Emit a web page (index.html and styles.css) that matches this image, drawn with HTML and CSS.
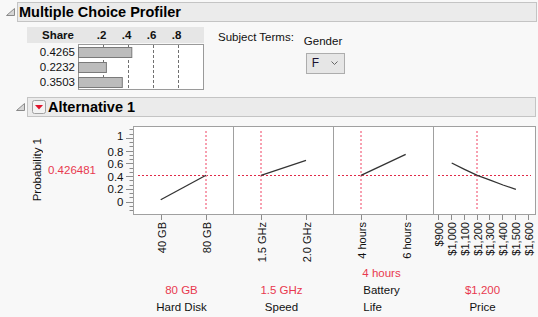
FILE: index.html
```html
<!DOCTYPE html>
<html lang="en">
<head>
<meta charset="UTF-8">
<meta name="viewport" content="width=device-width, initial-scale=1.0">
<title>Multiple Choice Profiler</title>
<link rel="stylesheet" href="styles.css">
</head>
<body>

<div class="outline">
    <div class="ol-head">
        <span class="disc"><svg width="9" height="8"><polygon points="0.5,7.5 8.5,7.5 8.5,0.5"/></svg></span>
        <div class="ol-bar root-bar"><span class="ol-title">Multiple Choice Profiler</span></div>
    </div>
    <div class="top-body">
        <div class="share">
            <div class="share-head">
                <span class="share-title">Share</span>
                <div class="share-ticks"><span>.2</span><span>.4</span><span>.6</span><span>.8</span></div>
            </div>
            <div class="share-body">
                <div class="share-vals">
                    <div>0.4265</div>
                    <div>0.2232</div>
                    <div>0.3503</div>
                </div>
                <svg class="share-plot" width="126" height="46">
                    <rect class="share-frame" x="0.5" y="0.5" width="125" height="45"/>
                    <line class="share-grid" x1="25.5" y1="1" x2="25.5" y2="45"/>
                    <line class="share-grid" x1="50.5" y1="1" x2="50.5" y2="45"/>
                    <line class="share-grid" x1="75.5" y1="1" x2="75.5" y2="45"/>
                    <line class="share-grid" x1="100.5" y1="1" x2="100.5" y2="45"/>
                    <rect class="share-bar" x="0.5" y="3.5" width="53.3" height="10"/>
                    <rect class="share-bar" x="0.5" y="18.5" width="27.9" height="10"/>
                    <rect class="share-bar" x="0.5" y="33.5" width="43.8" height="10"/>
                </svg>
            </div>
        </div>
        <div class="subject">
            <span class="subject-label">Subject Terms:</span>
            <div class="term">
                <span>Gender</span>
                <div class="combo">
                    <span>F</span>
                    <svg class="chev" width="7" height="5"><polyline points="0.5,0.5 3.5,3.5 6.5,0.5"/></svg>
                </div>
            </div>
        </div>
    </div>

    <div class="outline sub">
        <div class="ol-head">
            <span class="disc"><svg width="9" height="8"><polygon points="0.5,7.5 8.5,7.5 8.5,0.5"/></svg></span>
            <div class="ol-bar sub-bar">
                <span class="red-btn">
                    <svg width="14" height="14">
                        <rect x="0.5" y="0.5" width="13" height="13" rx="2"/>
                        <polygon points="3,5 11,5 7,9.5"/>
                    </svg>
                </span>
                <span class="ol-title">Alternative 1</span>
            </div>
        </div>
        <div class="profiler">
            <div class="prof-top">
                <div class="ylabel-col"><span class="ylabel">Probability 1</span></div>
                <div class="yvalue-col"><span class="current">0.426481</span></div>
                <svg class="prof-plot" width="437" height="144">
                    <!-- y axis -->
                    <g class="tick">
                        <line x1="29.5" y1="9.5" x2="33" y2="9.5"/>
                        <line x1="29.5" y1="14.5" x2="33" y2="14.5"/>
                        <line x1="26" y1="18.5" x2="33" y2="18.5"/>
                        <line x1="29.5" y1="22.5" x2="33" y2="22.5"/>
                        <line x1="29.5" y1="26.5" x2="33" y2="26.5"/>
                        <line x1="26" y1="31.5" x2="33" y2="31.5"/>
                        <line x1="29.5" y1="35.5" x2="33" y2="35.5"/>
                        <line x1="29.5" y1="39.5" x2="33" y2="39.5"/>
                        <line x1="26" y1="43.5" x2="33" y2="43.5"/>
                        <line x1="29.5" y1="48.5" x2="33" y2="48.5"/>
                        <line x1="29.5" y1="52.5" x2="33" y2="52.5"/>
                        <line x1="26" y1="56.5" x2="33" y2="56.5"/>
                        <line x1="29.5" y1="60.5" x2="33" y2="60.5"/>
                        <line x1="29.5" y1="65.5" x2="33" y2="65.5"/>
                        <line x1="26" y1="69.5" x2="33" y2="69.5"/>
                        <line x1="29.5" y1="73.5" x2="33" y2="73.5"/>
                        <line x1="29.5" y1="77.5" x2="33" y2="77.5"/>
                        <line x1="26" y1="82.5" x2="33" y2="82.5"/>
                        <line x1="29.5" y1="86.5" x2="33" y2="86.5"/>
                        <line x1="29.5" y1="90.5" x2="33" y2="90.5"/>
                    </g>
                    <g class="axis-text" text-anchor="end">
                        <text x="23.5" y="20">1</text>
                        <text x="23.5" y="36">0.8</text>
                        <text x="23.5" y="48">0.6</text>
                        <text x="23.5" y="60.6">0.4</text>
                        <text x="23.5" y="73.3">0.2</text>
                        <text x="23.5" y="86">0</text>
                    </g>

                    <!-- panels -->
                    <rect class="frame" x="33.5" y="6.5" width="402" height="88"/>
                    <line class="frame-line" x1="133.5" y1="6.5" x2="133.5" y2="94.5"/>
                    <line class="frame-line" x1="233.5" y1="6.5" x2="233.5" y2="94.5"/>
                    <line class="frame-line" x1="333.5" y1="6.5" x2="333.5" y2="94.5"/>

                    <!-- current settings -->
                    <g class="cur-h">
                        <line x1="38" y1="55.5" x2="129" y2="55.5"/>
                        <line x1="138" y1="55.5" x2="229" y2="55.5"/>
                        <line x1="238" y1="55.5" x2="329" y2="55.5"/>
                        <line x1="338" y1="55.5" x2="431" y2="55.5"/>
                    </g>
                    <g class="cur-v">
                        <line x1="106" y1="11" x2="106" y2="90"/>
                        <line x1="161" y1="11" x2="161" y2="90"/>
                        <line x1="261" y1="11" x2="261" y2="90"/>
                        <line x1="377" y1="11" x2="377" y2="90"/>
                    </g>

                    <!-- traces -->
                    <g class="trace">
                        <polyline points="60.7,79.7 106,55.3"/>
                        <polyline points="161,55.3 206,40.3"/>
                        <polyline points="261,55.3 305.7,34.3"/>
                        <polyline points="351.7,43 364.5,49.3 377.3,55.3 390.2,60.2 403,65 415.9,69.3"/>
                    </g>

                    <!-- x axes -->
                    <g class="tick">
                        <line x1="61.5" y1="95" x2="61.5" y2="100"/>
                        <line x1="106.5" y1="95" x2="106.5" y2="100"/>
                        <line x1="161.5" y1="95" x2="161.5" y2="100"/>
                        <line x1="206.5" y1="95" x2="206.5" y2="100"/>
                        <line x1="261.5" y1="95" x2="261.5" y2="100"/>
                        <line x1="306.5" y1="95" x2="306.5" y2="100"/>
                        <line x1="338.5" y1="95" x2="338.5" y2="100"/>
                        <line x1="351.5" y1="95" x2="351.5" y2="100"/>
                        <line x1="364.5" y1="95" x2="364.5" y2="100"/>
                        <line x1="377.5" y1="95" x2="377.5" y2="100"/>
                        <line x1="389.5" y1="95" x2="389.5" y2="100"/>
                        <line x1="402.5" y1="95" x2="402.5" y2="100"/>
                        <line x1="415.5" y1="95" x2="415.5" y2="100"/>
                        <line x1="428.5" y1="95" x2="428.5" y2="100"/>
                    </g>
                    <g class="axis-text x-labels" text-anchor="end">
                        <text transform="translate(65.5 102) rotate(-90)">40 GB</text>
                        <text transform="translate(110.5 102) rotate(-90)">80 GB</text>
                        <text transform="translate(165.5 102) rotate(-90)">1.5 GHz</text>
                        <text transform="translate(210.5 102) rotate(-90)">2.0 GHz</text>
                        <text transform="translate(265.5 102) rotate(-90)">4 hours</text>
                        <text transform="translate(310.5 102) rotate(-90)">6 hours</text>
                        <text transform="translate(342.5 102) rotate(-90)">$900</text>
                        <text transform="translate(355.5 102) rotate(-90)">$1,000</text>
                        <text transform="translate(368.5 102) rotate(-90)">$1,100</text>
                        <text transform="translate(381.5 102) rotate(-90)">$1,200</text>
                        <text transform="translate(393.5 102) rotate(-90)">$1,300</text>
                        <text transform="translate(406.5 102) rotate(-90)">$1,400</text>
                        <text transform="translate(419.5 102) rotate(-90)">$1,500</text>
                        <text transform="translate(432.5 102) rotate(-90)">$1,600</text>
                    </g>
                </svg>
            </div>
            <div class="factors">
                <div class="factor"><span class="current">80 GB</span><span class="fname">Hard Disk</span></div>
                <div class="factor"><span class="current">1.5 GHz</span><span class="fname">Speed</span></div>
                <div class="factor"><span class="current">4 hours</span><span class="fname">Battery<br>Life</span></div>
                <div class="factor"><span class="current">$1,200</span><span class="fname">Price</span></div>
            </div>
        </div>
    </div>
</div>

</body>
</html>
```

FILE: styles.css
```css
body {
    margin: 0;
    width: 538px;
    height: 317px;
    overflow: hidden;
    background-color: #f8f8f8;
    font-family: "Liberation Sans", Arial, sans-serif;
    font-size: 11.5px;
    line-height: 15px;
    color: #111;
}

/* outline boxes */
.ol-head {
    display: flex;
    align-items: center;
    height: 20px;
}
.outline > .ol-head:first-child {
    margin-top: 2px;
}
.disc {
    width: 17px;
    display: flex;
    justify-content: flex-end;
    padding-right: 2px;
    box-sizing: border-box;
}
.disc svg polygon {
    fill: #d6d6d6;
    stroke: #8a8a8a;
    stroke-width: 1;
}
.ol-bar {
    flex: 1;
    height: 20px;
    box-sizing: border-box;
    display: flex;
    align-items: center;
    padding-left: 1px;
    background-color: #ebebeb;
    border: 1px solid #c4c4c4;
}
.root-bar {
    margin-right: 1px;
}
.sub-bar {
    margin-right: 2px;
}
.ol-title {
    font-size: 14.5px;
    font-weight: bold;
    color: #000;
}
.sub {
    margin-left: 10px;
}
.red-btn {
    display: flex;
    margin-left: 3px;
    margin-right: 2px;
}
.red-btn rect {
    fill: #f3f3f3;
    stroke: #a0a0a0;
}
.red-btn polygon {
    fill: #e0142c;
}

/* share table */
.top-body {
    display: flex;
    align-items: flex-start;
    height: 73px;
    padding-left: 27px;
}
.share {
    margin-top: 5px;
}
.share-head {
    display: flex;
    align-items: center;
    width: 177px;
    height: 16px;
    background-color: #e6e6e6;
    font-weight: bold;
}
.share-title {
    width: 47px;
    text-align: right;
}
.share-ticks {
    display: grid;
    grid-template-columns: repeat(4, 25px);
    margin-left: 4px;
    padding-left: 11px;
    text-align: center;
}
.share-body {
    display: flex;
    margin-top: 1px;
}
.share-vals {
    width: 48px;
    margin-right: 3px;
    padding-top: 1px;
    text-align: right;
}
.share-frame {
    fill: #fff;
    stroke: #9a9a9a;
}
.share-grid {
    stroke: #707070;
    stroke-dasharray: 3 2;
}
.share-bar {
    fill: #bcbcbc;
    stroke: #7a7a7a;
}

/* subject terms */
.subject {
    display: flex;
    margin-left: 14px;
    margin-top: 8px;
}
.term {
    display: flex;
    flex-direction: column;
    align-items: flex-start;
    margin-left: 10px;
    margin-top: 4px;
}
.combo {
    display: flex;
    align-items: center;
    width: 39px;
    height: 21px;
    box-sizing: border-box;
    margin-top: 4px;
    margin-left: 2px;
    padding: 0 6px 0 5px;
    background-color: #e6e6e6;
    border: 1px solid #adadad;
    font-size: 12px;
    color: #1a1030;
}
.chev {
    margin-left: auto;
}
.chev polyline {
    fill: none;
    stroke: #666;
    stroke-width: 1;
}

/* profiler */
.profiler {
    padding-left: 17px;
}
.prof-top {
    display: flex;
    margin-top: 3px;
}
.ylabel-col,
.yvalue-col {
    height: 88px;
    margin-top: 6px;
    display: flex;
    align-items: center;
}
.ylabel-col {
    width: 21px;
    justify-content: center;
}
.ylabel {
    writing-mode: vertical-rl;
    transform: rotate(180deg);
}
.yvalue-col {
    width: 52px;
}
.current {
    color: #e8384f;
}
.axis-text {
    font-family: "Liberation Sans", Arial, sans-serif;
    font-size: 11.5px;
    fill: #111;
}
.x-labels {
    font-size: 11px;
}
.tick line {
    stroke: #8c8c8c;
    stroke-width: 1;
}
.frame {
    fill: #fff;
    stroke: #a0a0a0;
}
.frame-line {
    stroke: #a0a0a0;
}
.cur-h line {
    stroke: #e02a48;
    stroke-width: 1;
    stroke-dasharray: 2 2;
}
.cur-v line {
    stroke: #f7a0b0;
    stroke-width: 2;
    stroke-dasharray: 2 2;
}
.trace polyline {
    fill: none;
    stroke: #333;
    stroke-width: 1.3;
}

.factors {
    display: grid;
    grid-template-columns: 100px 100px 100px 102px;
    align-items: end;
    height: 55px;
    margin-left: 106px;
    line-height: 17px;
}
.factor {
    display: flex;
    flex-direction: column;
    align-items: center;
    padding-right: 3px;
    padding-bottom: 3px;
}
.fname {
    display: block;
    text-align: left;
}
```
